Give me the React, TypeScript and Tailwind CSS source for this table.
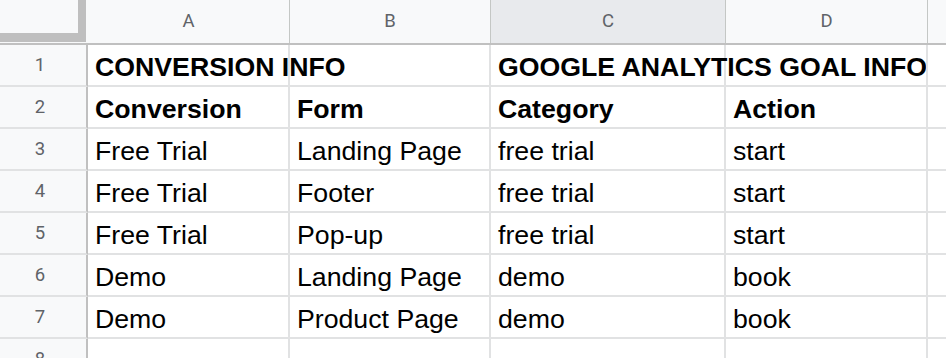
import React from "react";

const cols = [
  { key: "A", w: "w-[202px]" },
  { key: "B", w: "w-[201px]" },
  { key: "C", w: "w-[235px]" },
  { key: "D", w: "w-[202px]" },
  { key: "E", w: "flex-1" },
];

type Cell = { text: string; bold?: boolean };

const rows: Cell[][] = [
  [{ text: "CONVERSION INFO", bold: true }, { text: "" }, { text: "GOOGLE ANALYTICS GOAL INFO", bold: true }, { text: "" }, { text: "" }],
  [{ text: "Conversion", bold: true }, { text: "Form", bold: true }, { text: "Category", bold: true }, { text: "Action", bold: true }, { text: "" }],
  [{ text: "Free Trial" }, { text: "Landing Page" }, { text: "free trial" }, { text: "start" }, { text: "" }],
  [{ text: "Free Trial" }, { text: "Footer" }, { text: "free trial" }, { text: "start" }, { text: "" }],
  [{ text: "Free Trial" }, { text: "Pop-up" }, { text: "free trial" }, { text: "start" }, { text: "" }],
  [{ text: "Demo" }, { text: "Landing Page" }, { text: "demo" }, { text: "book" }, { text: "" }],
  [{ text: "Demo" }, { text: "Product Page" }, { text: "demo" }, { text: "book" }, { text: "" }],
  [{ text: "" }, { text: "" }, { text: "" }, { text: "" }, { text: "" }],
];

export default function App() {
  return (
    <div className="w-[946px] h-[358px] overflow-hidden bg-white font-['Liberation_Sans',Arial,sans-serif]">
      {/* column letters */}
      <div className="flex h-[45px] border-b-2 border-[#c0c0c0]">
        <div className="w-[88px] shrink-0 bg-[#f8f9fa] pr-[1px] pb-[1px]">
          <div className="h-full w-[86px] bg-[#f8f9fa] border-r-[8px] border-b-[9px] border-[#bfbfbf]" />
        </div>
        {cols.map((c) => (
          <div
            key={c.key}
            className={`${c.w} shrink-0 flex items-center justify-center pt-[1px] border-r border-[#c4c7c5] font-['Roboto',sans-serif] text-[18.5px] text-[#5f6368] ${
              c.key === "C" ? "bg-[#e8eaed]" : "bg-[#f8f9fa]"
            } ${c.key === "E" ? "border-r-0" : ""}`}
          >
            {c.key === "E" ? "" : c.key}
          </div>
        ))}
      </div>

      {rows.map((r, i) => (
        <div key={i} className="flex h-[42px]">
          <div className="w-[88px] shrink-0 flex items-center justify-center pr-[6px] pt-[1px] bg-[#f8f9fa] border-r-2 border-[#c0c0c0] border-b-2 border-b-[#e1e2e3] font-['Roboto',sans-serif] text-[18.5px] text-[#5f6368]">
            {i + 1}
          </div>
          {cols.map((c, j) => (
            <div
              key={c.key}
              className={`${c.w} shrink-0 flex items-center pt-[4px] pl-[7px] border-b-2 border-[#e1e2e3] ${
                j < 4 ? "border-r-2" : ""
              } text-[26.7px] text-black whitespace-nowrap overflow-visible ${r[j].bold ? "font-bold" : ""}`}
            >
              {r[j].text}
            </div>
          ))}
        </div>
      ))}
    </div>
  );
}
